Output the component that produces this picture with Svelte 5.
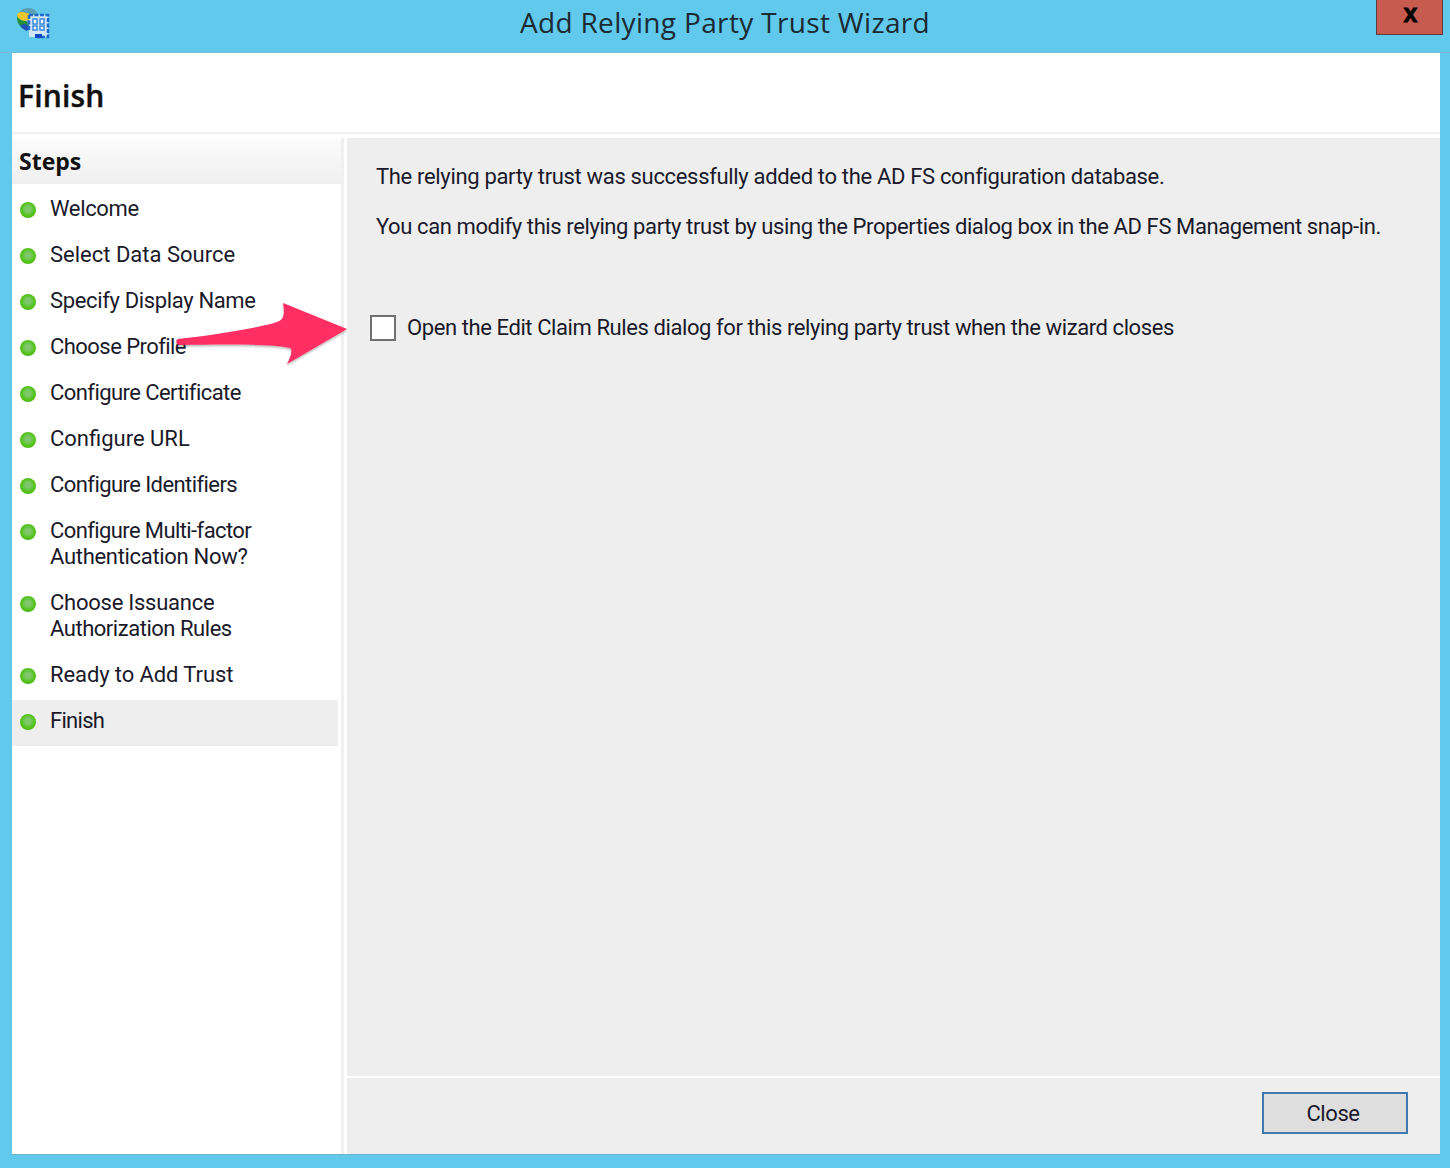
<script>
  const steps = [
    [['Welcome', -0.34]], [['Select Data Source', 0]], [['Specify Display Name', -0.35]], [['Choose Profile', -0.55]],
    [['Configure Certificate', -0.57]], [['Configure URL', 0]], [['Configure Identifiers', -0.57]],
    [['Configure Multi-factor', -0.6], ['Authentication Now?', -0.31]], [['Choose Issuance', -0.25], ['Authorization Rules', -0.47]],
    [['Ready to Add Trust', -0.1]], [['Finish', -0.7]]
  ];
</script>

<div class="window">
  <div class="titlebar">
    <svg class="appicon" width="36" height="34" viewBox="0 0 36 34">
      <circle cx="13" cy="13" r="11" fill="#5aa0b4"/>
      <path d="M2 9c2-4 6-3 9-2 3 0 5 2 6 3l-3 4-5 1c-3 0-6-2-7-6z" fill="#efc62c"/>
      <path d="M2 11c0 6 4 11 9 13l3-5-3-4c-4 0-7-2-9-4z" fill="#22913b"/>
      <path d="M5 19c2 3 4 5 7 6l3-4-5-3z" fill="#1e50b8"/>
      <rect x="14" y="9" width="19" height="22" fill="#cfe6f7"/>
      <path d="M14 9h19v22h-10M14 9v16" fill="none" stroke="#1f68cc" stroke-width="2.5" stroke-dasharray="4 1.5"/>
      <path d="M18 13h4v5h-4zM25 13h4v5h-4zM18 20h4v4h-4zM25 20h4v4h-4z" fill="#ffffff" stroke="#3d86dc" stroke-width="1.5"/>
      <rect x="20" y="28" width="7" height="4" fill="#0f46c4"/>
    </svg>
    <div class="title">Add Relying Party Trust Wizard</div>
    <div class="close-x"><span>x</span></div>
  </div>
  <div class="dialog">
    <header class="head"><h1>Finish</h1></header>
    <div class="columns">
      <aside class="side">
        <div class="steps-title">Steps</div>
        <ul class="steps">
          {#each steps as lines}
            <li class:active={lines[0][0] === 'Finish'}>
              <span class="dot"></span>
              <span class="label">{#each lines as [text, spacing]}<span class="ln" style:letter-spacing="{spacing}px">{text}</span>{/each}</span>
            </li>
          {/each}
        </ul>
      </aside>
      <main class="main">
        <div class="content">
          <p class="p1">The relying party trust was successfully added to the AD FS configuration database.</p>
          <p class="p2">You can modify this relying party trust by using the Properties dialog box in the AD FS Management snap-in.</p>
          <label class="check"><span class="box"></span><span>Open the Edit Claim Rules dialog for this relying party trust when the wizard closes</span></label>
        </div>
        <div class="footer"><button class="closebtn">Close</button></div>
      </main>
    </div>
  </div>
  <svg class="arrow" width="180" height="70" viewBox="0 0 180 70">
    <defs><filter id="s" x="-10%" y="-10%" width="120%" height="130%"><feDropShadow dx="0" dy="1.5" stdDeviation="1.2" flood-color="#000" flood-opacity=".3"/></filter></defs>
    <path d="M4 39C40 35 85 28 103 22C110 20 111 14 109 3L173 29L113 64C117 56 119 50 116 48C100 44 50 44 6 45C2 45 1 40 4 39Z" fill="#ff2d63" filter="url(#s)"/>
  </svg>
</div>

<style>
  :global(body) { margin: 0; background: #61c9ec; }
  .window { position: relative; width: 1450px; height: 1168px; display: flex; flex-direction: column; background: #61c9ec; font-family: Roboto, "Open Sans", sans-serif; color: #1a1a2a; overflow: hidden; }
  .titlebar { position: relative; height: 52px; display: flex; justify-content: center; align-items: center; flex: none; border-bottom: 1px solid #7ab8d2; }
  .appicon { position: absolute; left: 15px; top: 6px; overflow: visible; }
  .title { font-size: 28px; color: #1c2a33; padding-bottom: 9px; font-family: "Open Sans", sans-serif; letter-spacing: .34px; }
  .close-x { position: absolute; left: 1376px; top: 0; width: 67px; height: 35px; background: #c75b50; border: 1px solid #5f3a38; border-top: 0; box-sizing: border-box; display: flex; align-items: center; justify-content: center; }
  .close-x span { font: bold 25px/1 "Liberation Sans", sans-serif; color: #000; padding: 0 0 8px 2px; -webkit-text-stroke: .8px #000; }
  .dialog { margin: 0 10px 0 12px; height: 1101px; background: #fff; display: flex; flex-direction: column; box-shadow: 0 1px 0 #6fb5d0; }
  .head { height: 79px; flex: none; border-bottom: 2px solid #efefef; box-sizing: content-box; }
  h1 { margin: 0; padding: 26px 0 0 6px; font-size: 30px; line-height: 34px; color: #111; font-family: "Open Sans", sans-serif; font-weight: 600; letter-spacing: .2px; -webkit-text-stroke: .4px #111; }
  .columns { flex: 1; display: flex; padding-top: 4px; min-height: 0; }
  .side { width: 329px; flex: none; border-right: 3px solid #f0f0f0; box-sizing: content-box; }
  .steps-title { height: 45px; margin-top: 1px; background: linear-gradient(#fbfbfb, #efefef); font-size: 23px; font-weight: 700; line-height: 44px; padding-left: 7px; color: #111; font-family: "Open Sans", sans-serif; }
  .steps { list-style: none; margin: 0; padding: 4px 0 0; width: 326px; }
  .steps li { display: flex; padding: 8px 0 12px; font-size: 22px; line-height: 26px; }
  .steps li.active { background: #eeeeee; }
  .dot { width: 16px; height: 16px; margin: 6px 0 0 8px; border-radius: 50%; flex: none; background: radial-gradient(circle at 50% 45%, #7ec76a 0 22%, #53c41a 55%, #3fae10 100%); }
  .label { margin-left: 14px; }
  .ln { display: block; white-space: nowrap; }
  .main { flex: 1; margin-left: 3px; display: flex; flex-direction: column; background: #eeeeee; min-height: 0; }
  .content { flex: 1; padding-left: 29px; font-size: 22px; line-height: 26px; }
  .p1 { margin: 26px 0 0; letter-spacing: -.33px; }
  .p2 { margin: 24px 0 0; white-space: nowrap; letter-spacing: -.4px; }
  .check { display: flex; align-items: center; margin: 75px 0 0 -6px; gap: 11px; letter-spacing: -.41px; }
  .box { width: 26px; height: 26px; box-sizing: border-box; background: #fff; border: 2px solid #707070; }
  .footer { height: 62px; flex: none; border-top: 2px solid #fff; display: flex; justify-content: flex-end; padding: 14px 32px 0 0; box-sizing: content-box; }
  .closebtn { width: 146px; height: 42px; box-sizing: border-box; background: #dedede; border: 2px solid #3f7aae; font: 22px/1 Roboto, sans-serif; color: #1a1a2a; padding: 2px 4px 0 0; letter-spacing: -.4px; }
  .arrow { position: absolute; left: 174px; top: 300px; overflow: visible; }
</style>
